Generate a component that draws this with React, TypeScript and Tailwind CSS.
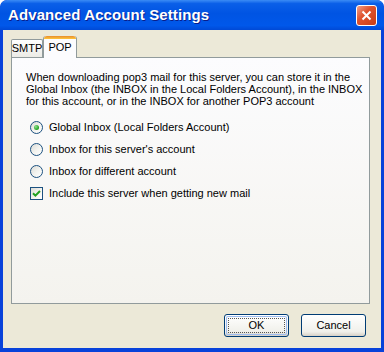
const ui = { fontFamily: '"Liberation Sans", Arial, sans-serif' };

function Radio({ checked }: { checked?: boolean }) {
  return (
    <span className="flex h-[13px] w-[13px] shrink-0 items-center justify-center rounded-full border border-[#1c5180] bg-[linear-gradient(135deg,#dcdcd7_0%,#f4f4f0_55%,#ffffff_100%)]">
      {checked && (
        <span className="h-[5px] w-[5px] rounded-full bg-[radial-gradient(circle_at_35%_35%,#8ee08e,#21a121_70%,#1a8a1a)]" />
      )}
    </span>
  );
}

function Checkbox({ checked }: { checked?: boolean }) {
  return (
    <span className="flex h-[13px] w-[13px] shrink-0 items-center justify-center border border-[#1c5180] bg-[linear-gradient(135deg,#dcdcd7_0%,#f4f4f0_55%,#ffffff_100%)]">
      {checked && (
        <svg width="9" height="9" viewBox="0 0 9 9">
          <path d="M1 4.2 L3.4 6.6 L8 2" fill="none" stroke="#21a121" strokeWidth="2" />
        </svg>
      )}
    </span>
  );
}

function Option({ label, checked, box }: { label: string; checked?: boolean; box?: boolean }) {
  return (
    <div className="flex h-[22px] items-center gap-[6px] pl-[18px] text-[11px] text-black">
      {box ? <Checkbox checked={checked} /> : <Radio checked={checked} />}
      <span className="whitespace-nowrap">{label}</span>
    </div>
  );
}

export default function App() {
  return (
    <div className="flex h-[352px] w-[384px] flex-col overflow-hidden rounded-t-[7px] bg-[#0842da]" style={ui}>
      {/* title bar */}
      <div className="flex h-[30px] shrink-0 items-center justify-between rounded-t-[7px] bg-[linear-gradient(to_bottom,#3b8cf5_0%,#0a5fe8_12%,#0054e3_45%,#0058ea_85%,#0049d6_100%)] pl-[8px] pr-[7px]">
        <span
          className="text-[15px] font-bold tracking-[0.1px] text-white"
          style={{ textShadow: '1px 1px 0 #0a1e8a' }}
        >
          Advanced Account Settings
        </span>
        <div className="flex h-[21px] w-[21px] items-center justify-center rounded-[3px] border border-white bg-[linear-gradient(135deg,#f0a08a_0%,#e0542f_40%,#c93d15_100%)]">
          <svg width="11" height="11" viewBox="0 0 11 11">
            <path d="M1.5 1.5 L9.5 9.5 M9.5 1.5 L1.5 9.5" stroke="white" strokeWidth="2" />
          </svg>
        </div>
      </div>

      {/* body */}
      <div className="mx-[3px] mb-[4px] flex flex-1 flex-col bg-[#ece9d8] pl-[8px] pr-[11px]">
        {/* tabs */}
        <div className="mt-[6px] flex h-[21px] items-end">
          <div className="flex h-[18px] w-[32px] items-center justify-center rounded-t-[2px] border border-b-0 border-[#919b9c] bg-[linear-gradient(to_bottom,#ffffff,#ecebe6)] text-[11px]">
            SMTP
          </div>
          <div className="relative z-10 -mb-px flex h-[22px] w-[34px] flex-col rounded-t-[3px] border-x border-[#919b9c] bg-[#fcfcfe]">
            <div className="h-[3px] rounded-t-[3px] bg-[linear-gradient(to_bottom,#e68b2c,#ffc73c)]" />
            <div className="flex flex-1 items-center justify-center pb-[2px] text-[11px]">POP</div>
          </div>
        </div>

        {/* panel */}
        <div className="flex h-[247px] w-[359px] flex-col border border-[#919b9c] bg-[linear-gradient(to_bottom,#fcfcfe,#f4f3ee)] pt-[13px]">
          <div className="pl-[14px] text-[11px] leading-[12px] text-black">
            <div className="whitespace-nowrap">When downloading pop3 mail for this server, you can store it in the</div>
            <div className="whitespace-nowrap">Global Inbox (the INBOX in the Local Folders Account), in the INBOX</div>
            <div className="whitespace-nowrap">for this account, or in the INBOX for another POP3 account</div>
          </div>
          <div className="mt-[9px] flex flex-col">
            <Option label="Global Inbox (Local Folders Account)" checked />
            <Option label="Inbox for this server's account" />
            <Option label="Inbox for different account" />
            <Option label="Include this server when getting new mail" checked box />
          </div>
        </div>

        {/* buttons */}
        <div className="mt-[10px] flex justify-end gap-[12px] pr-[4px]">
          <button className="flex h-[23px] w-[65px] items-center justify-center rounded-[3px] border border-[#003c74] bg-[linear-gradient(to_bottom,#ffffff,#f0f0ea_80%,#d6d0c5)] p-[1px] text-[11px] text-black">
            <span className="flex h-full w-full items-center justify-center rounded-[2px] shadow-[inset_0_0_0_1px_#9ebcf0]">
              <span className="flex h-[15px] w-[57px] items-center justify-center border border-dotted border-[#555]">OK</span>
            </span>
          </button>
          <button className="flex h-[23px] w-[65px] items-center justify-center rounded-[3px] border border-[#003c74] bg-[linear-gradient(to_bottom,#ffffff,#f0f0ea_80%,#d6d0c5)] text-[11px] text-black">
            Cancel
          </button>
        </div>
      </div>
    </div>
  );
}
